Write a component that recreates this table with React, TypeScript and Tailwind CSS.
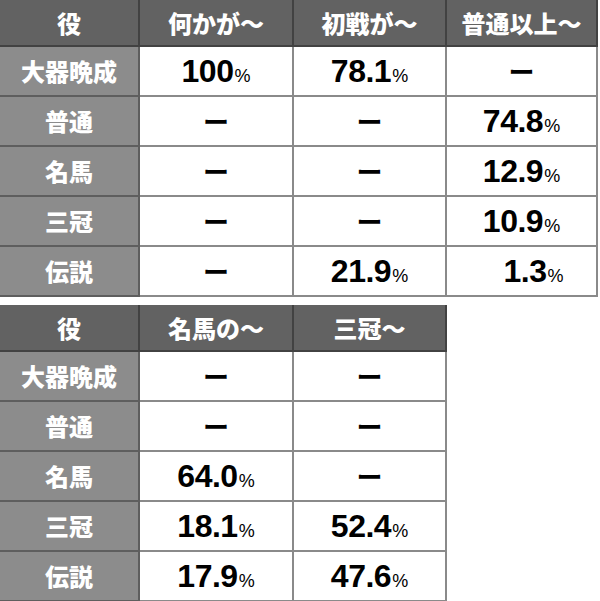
const jp = "font-['Noto_Sans_CJK_JP','Noto_Sans',sans-serif]";
const num = "font-['Liberation_Sans',Arial,sans-serif]";

type Cell = string | null;

const table1 = {
  cols: "grid-cols-[140px_154px_153px_151px]",
  heads: ["役", "何かが～", "初戦が～", "普通以上～"],
  rows: [
    { label: "大器晩成", vals: ["100", "78.1", null] as Cell[] },
    { label: "普通", vals: [null, null, "74.8"] as Cell[] },
    { label: "名馬", vals: [null, null, "12.9"] as Cell[] },
    { label: "三冠", vals: [null, null, "10.9"] as Cell[] },
    { label: "伝説", vals: [null, "21.9", "1.3"] as Cell[] },
  ],
};

const table2 = {
  cols: "grid-cols-[140px_154px_153px]",
  heads: ["役", "名馬の～", "三冠～"],
  rows: [
    { label: "大器晩成", vals: [null, null] as Cell[] },
    { label: "普通", vals: [null, null] as Cell[] },
    { label: "名馬", vals: ["64.0", null] as Cell[] },
    { label: "三冠", vals: ["18.1", "52.4"] as Cell[] },
    { label: "伝説", vals: ["17.9", "47.6"] as Cell[] },
  ],
};

function Value({ v }: { v: Cell }) {
  if (v === null) {
    return <span className={`${jp} text-[26px] font-bold text-black leading-none`}>ー</span>;
  }
  return (
    <span className={`${num} flex items-baseline text-black leading-none ${v.length === 3 && v.includes(".") ? "pl-[24px]" : ""}`}>
      <span className="text-[32px] font-bold tracking-[-0.5px]">{v}</span>
      <span className="text-[18px] ml-[1px]">%</span>
    </span>
  );
}

function Table({ t }: { t: typeof table1 }) {
  return (
    <div className={`grid ${t.cols} w-fit`}>
      {t.heads.map((h) => (
        <div
          key={h}
          className={`${jp} h-[47px] flex items-center justify-center bg-[#626262] border-r-2 border-b-2 border-[#424242] text-white text-[24px] font-black`}
        >
          {h}
        </div>
      ))}
      {t.rows.map((r) => (
        <div key={r.label} className="contents">
          <div
            className={`${jp} h-[50px] flex items-center justify-center bg-[#8c8c8c] border-r-2 border-b-2 border-[#5e5e5e] text-white text-[24px] font-black`}
          >
            {r.label}
          </div>
          {r.vals.map((v, i) => (
            <div
              key={i}
              className="h-[50px] flex items-center justify-center bg-white border-r-2 border-b-2 border-[#8a8a8a]"
            >
              <Value v={v} />
            </div>
          ))}
        </div>
      ))}
    </div>
  );
}

export default function App() {
  return (
    <div className="w-[600px] h-[601px] bg-white overflow-hidden flex flex-col gap-[8px]">
      <Table t={table1} />
      <Table t={table2} />
    </div>
  );
}
